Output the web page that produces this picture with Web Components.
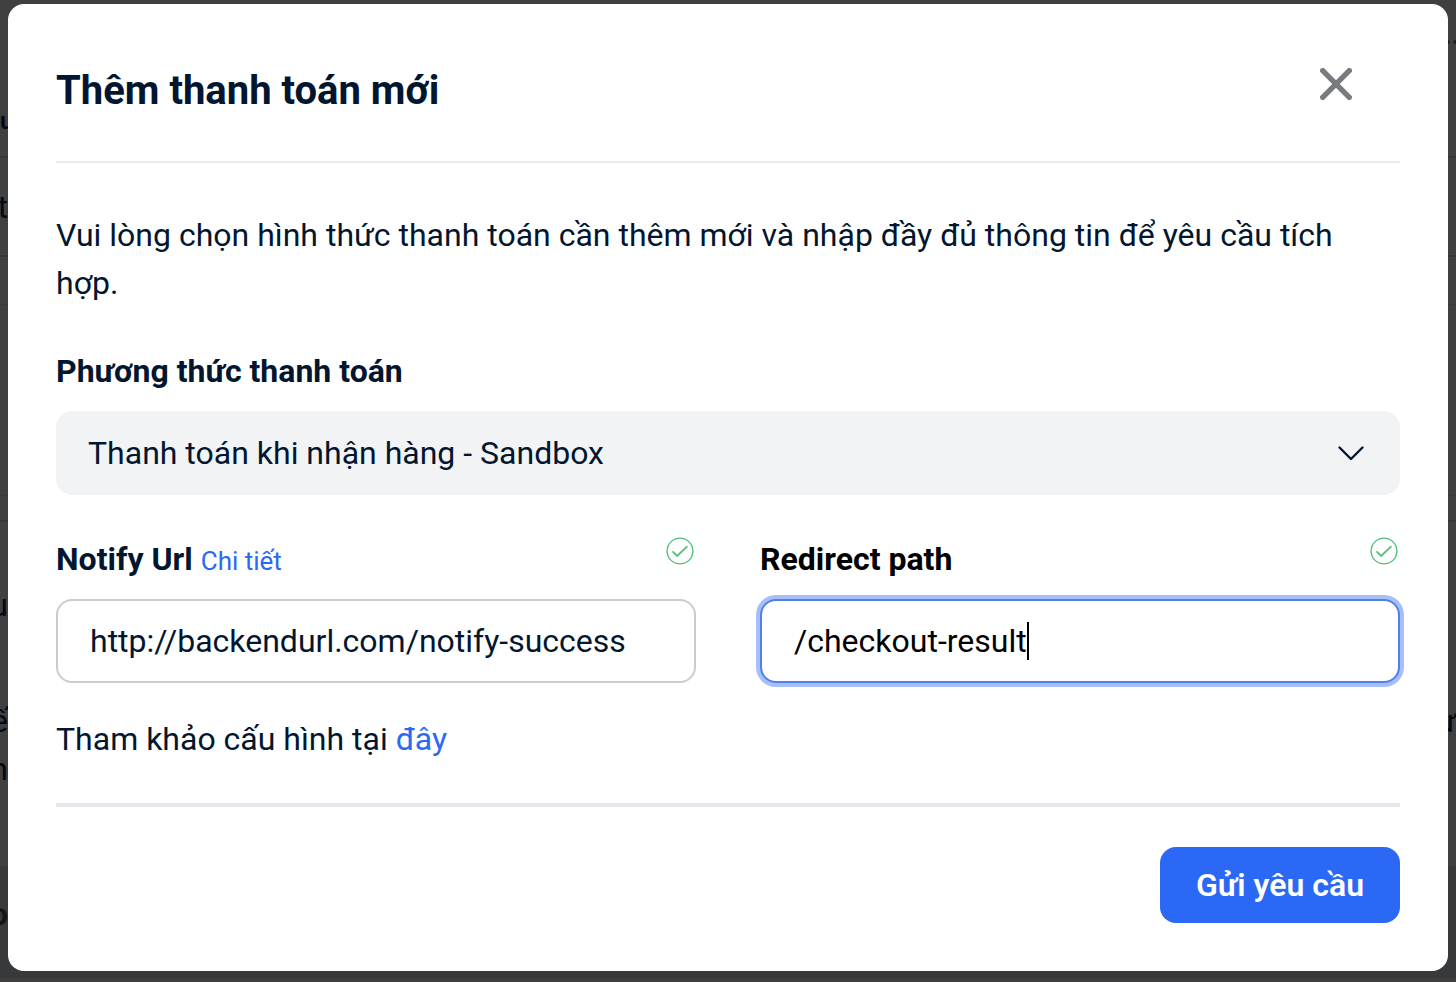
<!DOCTYPE html>
<html lang="vi">
<head>
<meta charset="utf-8">
<meta name="viewport" content="width=device-width, initial-scale=1">
<title>Thêm thanh toán mới</title>
<style>
  body {
    margin: 0;
    background-color: #404040;
    color: #03162f;
    font-family: Roboto, "Liberation Sans", sans-serif;
    font-size: 32px;
    line-height: 48px;
  }

  a {
    color: #2c68f6;
    text-decoration: none;
  }

  .small {
    font-size: 26px;
    line-height: 40px;
  }
</style>
</head>
<body>

<dimmed-page>
  <payment-dialog>
    <span slot="title">Thêm thanh toán mới</span>
    <span slot="intro">Vui lòng chọn hình thức thanh toán cần thêm mới và nhập đầy đủ thông tin để yêu cầu tích hợp.</span>
    <select-field slot="method" option="Thanh toán khi nhận hàng - Sandbox">Phương thức thanh toán</select-field>
    <text-field slot="fields" value="http://backendurl.com/notify-success">
      Notify Url
      <a slot="extra" class="small" href="#detail">Chi tiết</a>
    </text-field>
    <text-field slot="fields" value="/checkout-result" active>Redirect path</text-field>
    <span slot="hint">Tham khảo cấu hình tại <a href="#docs">đây</a></span>
    <primary-button slot="actions">Gửi yêu cầu</primary-button>
  </payment-dialog>
</dimmed-page>

<script>
function makeTemplate(html) {
  const template = document.createElement('template');
  template.innerHTML = html;
  return template;
}

const pageTemplate = makeTemplate(`
  <style>
    :host {
      display: grid;
      min-height: 100vh;
      overflow: hidden;
    }

    .behind, .front {
      grid-area: 1 / 1;
      min-width: 0;
    }

    .behind {
      display: flex;
      flex-direction: column;
      color: #020b18;
    }

    .front {
      box-sizing: border-box;
      padding: 4px 8px 8px;
    }

    .row {
      box-sizing: border-box;
      display: flex;
      justify-content: space-between;
      align-items: center;
      border-bottom: 2px solid #363636;
    }

    .row span {
      display: flex;
      width: 8px;
      overflow: hidden;
      white-space: nowrap;
    }

    .row .end {
      justify-content: flex-end;
    }

    .row svg {
      margin-left: auto;
    }

    .plain {
      border-bottom-color: transparent;
    }

    .faint {
      border-bottom-color: #3b3b3b;
    }

    .bold {
      font-weight: 700;
    }

    .caption {
      font-size: 24px;
    }

    .footer {
      padding-bottom: 16px;
      background-color: #38393a;
      border-bottom: 0;
      color: #161616;
    }
  </style>
  <div class="behind" aria-hidden="true">
    <div class="row plain" style="height: 86px">
      <svg width="8" height="4" viewBox="0 0 8 4" fill="#222"><circle cx="0" cy="2" r="2"/><circle cx="7" cy="2" r="2"/></svg>
    </div>
    <div class="row" style="height: 72px"><span class="bold caption">u</span></div>
    <div class="row" style="height: 99px"><span class="end">t</span></div>
    <div class="row faint" style="height: 49px"></div>
    <div class="row faint" style="height: 190px"></div>
    <div class="row" style="height: 26px"></div>
    <div class="row plain" style="height: 168px"><span class="end">u</span></div>
    <div class="row plain" style="height: 64px"><span class="end">ế</span><span class="end">ư</span></div>
    <div class="row plain" style="height: 32px"><span class="end">n</span></div>
    <div class="row plain" style="height: 80px"></div>
    <div class="row footer" style="height: 112px"><span class="end bold">o</span></div>
  </div>
  <div class="front"><slot></slot></div>
`);

class DimmedPage extends HTMLElement {
  constructor() {
    super();
    this.attachShadow({mode: 'open'});
    this.shadowRoot.appendChild(pageTemplate.content.cloneNode(true));
  }
}
customElements.define('dimmed-page', DimmedPage);

const dialogTemplate = makeTemplate(`
  <style>
    :host {
      display: block;
      box-sizing: border-box;
      padding: 48px;
      border-radius: 16px;
      background-color: #fff;
    }

    header {
      display: flex;
      justify-content: space-between;
      align-items: flex-start;
      padding-bottom: 31px;
      border-bottom: 2px solid #ebebeb;
    }

    h1 {
      margin: 0;
      font-size: 40px;
      font-weight: 700;
      line-height: 78px;
    }

    .close {
      display: flex;
      align-items: center;
      justify-content: center;
      width: 64px;
      height: 64px;
      margin: 0 32px 0 0;
      padding: 0;
      border: 0;
      background: none;
      color: #787c80;
      cursor: pointer;
    }

    p {
      margin: 48px 0 0;
    }

    .method {
      margin-top: 40px;
    }

    .fields {
      display: grid;
      grid-template-columns: repeat(2, minmax(0, 1fr));
      column-gap: 64px;
      margin-top: 40px;
    }

    .hint {
      margin-top: 32px;
    }

    footer {
      display: flex;
      justify-content: flex-end;
      margin-top: 40px;
      padding-top: 40px;
      border-top: 4px solid #e5e8ec;
    }
  </style>
  <section role="dialog" aria-labelledby="title">
    <header>
      <h1 id="title"><slot name="title"></slot></h1>
      <button class="close" type="button" aria-label="Đóng">
        <svg width="32" height="32" viewBox="0 0 32 32" fill="none" stroke="currentColor" stroke-width="5.4" stroke-linecap="round">
          <path d="M2.7 2.7L29.3 29.3M29.3 2.7L2.7 29.3"/>
        </svg>
      </button>
    </header>
    <p><slot name="intro"></slot></p>
    <div class="method"><slot name="method"></slot></div>
    <div class="fields"><slot name="fields"></slot></div>
    <p class="hint"><slot name="hint"></slot></p>
    <footer><slot name="actions"></slot></footer>
  </section>
`);

class PaymentDialog extends HTMLElement {
  constructor() {
    super();
    this.attachShadow({mode: 'open'});
    this.shadowRoot.appendChild(dialogTemplate.content.cloneNode(true));
  }
}
customElements.define('payment-dialog', PaymentDialog);

const selectTemplate = makeTemplate(`
  <style>
    :host {
      display: flex;
      flex-direction: column;
      gap: 16px;
    }

    label {
      font-weight: 700;
    }

    .control {
      display: grid;
      align-items: center;
    }

    select, svg {
      grid-area: 1 / 1;
    }

    select {
      appearance: none;
      width: 100%;
      margin: 0;
      padding: 18px 96px 18px 32px;
      border: 0;
      border-radius: 16px;
      background-color: #f2f3f5;
      color: inherit;
      font: inherit;
    }

    svg {
      justify-self: end;
      margin-right: 33px;
      pointer-events: none;
    }
  </style>
  <label for="select"><slot></slot></label>
  <div class="control">
    <select id="select"></select>
    <svg width="32" height="32" viewBox="0 0 32 32" fill="none" stroke="currentColor" stroke-width="2.4" stroke-linecap="round" stroke-linejoin="round">
      <path d="M4.5 10.5L16 22L27.5 10.5"/>
    </svg>
  </div>
`);

class SelectField extends HTMLElement {
  constructor() {
    super();
    this.attachShadow({mode: 'open'});
    this.shadowRoot.appendChild(selectTemplate.content.cloneNode(true));
  }

  connectedCallback() {
    const text = this.getAttribute('option');
    this.shadowRoot.querySelector('select').replaceChildren(new Option(text));
  }
}
customElements.define('select-field', SelectField);

const fieldTemplate = makeTemplate(`
  <style>
    :host {
      display: flex;
      flex-direction: column;
      gap: 16px;
      min-width: 0;
    }

    :host([active]) {
      color: #000;
    }

    .top {
      display: flex;
      align-items: baseline;
      gap: 8px;
    }

    label {
      font-weight: 700;
    }

    .valid {
      align-self: flex-start;
      margin-left: auto;
    }

    .box {
      display: flex;
      align-items: center;
      padding: 16px 32px;
      border: 2px solid #ccc;
      border-radius: 16px;
      background-color: #fff;
      cursor: text;
    }

    input {
      field-sizing: content;
      min-width: 0;
      max-width: 100%;
      height: 48px;
      padding: 0;
      border: 0;
      outline: 0;
      background: none;
      color: inherit;
      font: inherit;
      caret-color: transparent;
    }

    .caret {
      display: none;
      flex: none;
      width: 2px;
      height: 38px;
      background-color: currentColor;
    }

    :host([active]) .box {
      border-color: #4e80ee;
      box-shadow: 0 0 0 4px #a6bff7;
    }

    :host([active]) .caret {
      display: block;
    }
  </style>
  <div class="top">
    <label for="input"><slot></slot></label>
    <slot name="extra"></slot>
    <svg class="valid" width="32" height="32" viewBox="0 0 32 32" fill="none" stroke="#56c07d" stroke-linecap="round" stroke-linejoin="round">
      <circle cx="16" cy="16" r="12.9" stroke-width="1.4"/>
      <path d="M9 16.8L13.2 21L22.8 11.6" stroke-width="1.8"/>
    </svg>
  </div>
  <div class="box">
    <input id="input" type="text" spellcheck="false">
    <span class="caret"></span>
  </div>
`);

class TextField extends HTMLElement {
  constructor() {
    super();
    this.attachShadow({mode: 'open'});
    this.shadowRoot.appendChild(fieldTemplate.content.cloneNode(true));
  }

  connectedCallback() {
    const input = this.shadowRoot.querySelector('input');
    input.value = this.getAttribute('value') || '';
    this.shadowRoot.querySelector('.box').addEventListener('click', () => input.focus());
    input.addEventListener('focus', () => this.activate());
  }

  // only one field carries the ring and the caret
  activate() {
    document.querySelectorAll('text-field').forEach((field) => {
      field.toggleAttribute('active', field === this);
    });
  }
}
customElements.define('text-field', TextField);

const buttonTemplate = makeTemplate(`
  <style>
    :host {
      display: block;
    }

    button {
      min-width: 240px;
      padding: 14px 32px;
      border: 0;
      border-radius: 16px;
      background-color: #2c68f6;
      color: #fff;
      font: inherit;
      font-weight: 600;
      cursor: pointer;
    }
  </style>
  <button type="button"><slot></slot></button>
`);

class PrimaryButton extends HTMLElement {
  constructor() {
    super();
    this.attachShadow({mode: 'open'});
    this.shadowRoot.appendChild(buttonTemplate.content.cloneNode(true));
  }
}
customElements.define('primary-button', PrimaryButton);
</script>
</body>
</html>
